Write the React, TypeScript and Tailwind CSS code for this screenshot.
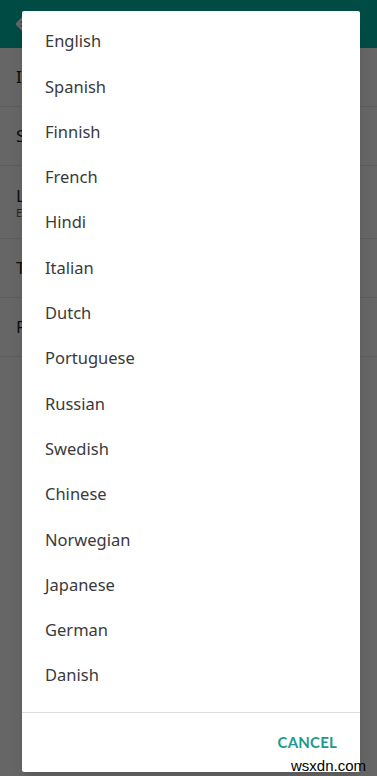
import React from 'react'
import { ArrowLeft, ChevronRight } from 'lucide-react'

const languages = [
  'English',
  'Spanish',
  'Finnish',
  'French',
  'Hindi',
  'Italian',
  'Dutch',
  'Portuguese',
  'Russian',
  'Swedish',
  'Chinese',
  'Norwegian',
  'Japanese',
  'German',
  'Danish',
]

// settings rows that sit behind the dialog
const rows = [
  { title: 'Ignore', h: 'h-[59px]' },
  { title: 'Sound', h: 'h-[59px]' },
  { title: 'Language', sub: 'English', h: 'h-[73px]' },
  { title: 'Theme', h: 'h-[59px]' },
  { title: 'Privacy', h: 'h-[59px]' },
]

export default function App() {
  return (
    <div
      className="relative w-[377px] h-[776px] overflow-hidden bg-white"
      style={{ fontFamily: '"Noto Sans", Lato, sans-serif' }}
    >
      {/* page underneath */}
      <div className="h-[48px] bg-[#00bfad] flex items-center px-3">
        <ArrowLeft className="w-6 h-6 text-white" strokeWidth={2.5} />
      </div>
      <div className="flex flex-col">
        {rows.map((r) => (
          <div
            key={r.title}
            className={`${r.h} flex items-center justify-between pl-4 pr-3 border-b border-[#e6e6e6]`}
          >
            <div className="flex flex-col leading-tight">
              <span className="text-[17px] text-[#222]">{r.title}</span>
              {r.sub && <span className="text-[11px] text-[#555]">{r.sub}</span>}
            </div>
            <ChevronRight className="w-5 h-5 text-[#333]" />
          </div>
        ))}
      </div>

      {/* scrim */}
      <div className="absolute inset-0 bg-black/60" />

      {/* dialog */}
      <div className="absolute left-[22px] top-[11px] w-[338px] h-[761px] bg-white rounded-[2px] flex flex-col shadow-lg">
        <ul className="pt-[8px] pb-[12px] flex-1">
          {languages.map((lang) => (
            <li
              key={lang}
              className="h-[45.3px] flex items-center pl-[23px] text-[16.5px] text-[#3a3a3a]"
            >
              {lang}
            </li>
          ))}
        </ul>
        <div className="h-[60px] border-t border-[#dddddd] flex items-center justify-end pr-[23px]">
          <span
            className="text-[15px] font-bold text-[#1b9a8d] tracking-[0.2px]"
            style={{ fontFamily: 'Lato, sans-serif' }}
          >
            CANCEL
          </span>
        </div>
      </div>

      {/* watermark */}
      <div
        className="absolute right-[11px] bottom-[3px] text-[15px] leading-none text-black"
        style={{ fontFamily: '"Liberation Sans", sans-serif' }}
      >
        wsxdn.com
      </div>
    </div>
  )
}
